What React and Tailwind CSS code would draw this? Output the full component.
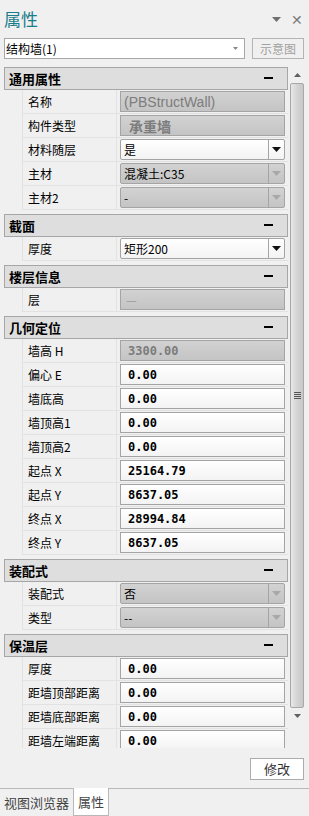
import React from "react";

const cjk = { fontFamily: '"Noto Sans CJK SC", "Noto Sans", sans-serif' };
const num = { fontFamily: '"DejaVu Sans Mono", "Liberation Mono", monospace' };

const sections = [
  {
    title: "通用属性",
    rows: [
      { name: "名称", value: "(PBStructWall)", kind: "ro", font: "latin" },
      { name: "构件类型", value: "承重墙", kind: "ro", font: "bold" },
      { name: "材料随层", value: "是", kind: "combo" },
      { name: "主材", value: "混凝土:C35", kind: "combo-ro" },
      { name: "主材2", value: "-", kind: "combo-ro" },
    ],
  },
  { title: "截面", rows: [{ name: "厚度", value: "矩形200", kind: "combo" }] },
  { title: "楼层信息", rows: [{ name: "层", value: "—", kind: "ro", font: "dash" }] },
  {
    title: "几何定位",
    rows: [
      { name: "墙高 H", value: "3300.00", kind: "ro", font: "num" },
      { name: "偏心 E", value: "0.00", kind: "edit" },
      { name: "墙底高", value: "0.00", kind: "edit" },
      { name: "墙顶高1", value: "0.00", kind: "edit" },
      { name: "墙顶高2", value: "0.00", kind: "edit" },
      { name: "起点 X", value: "25164.79", kind: "edit" },
      { name: "起点 Y", value: "8637.05", kind: "edit" },
      { name: "终点 X", value: "28994.84", kind: "edit" },
      { name: "终点 Y", value: "8637.05", kind: "edit" },
    ],
  },
  {
    title: "装配式",
    rows: [
      { name: "装配式", value: "否", kind: "combo-ro" },
      { name: "类型", value: "--", kind: "combo-ro" },
    ],
  },
  {
    title: "保温层",
    rows: [
      { name: "厚度", value: "0.00", kind: "edit" },
      { name: "距墙顶部距离", value: "0.00", kind: "edit" },
      { name: "距墙底部距离", value: "0.00", kind: "edit" },
      { name: "距墙左端距离", value: "0.00", kind: "edit" },
    ],
  },
];

function Arrow({ dark }) {
  return (
    <svg width="9" height="5" viewBox="0 0 9 5">
      <path d="M0 0h9L4.5 5z" fill={dark ? "#111" : "#a8a8a8"} />
    </svg>
  );
}

function Value({ row }) {
  const ro = row.kind === "ro" || row.kind === "combo-ro";
  const bg = ro
    ? "bg-gradient-to-b from-[#d2d2d2] to-[#c4c4c4]"
    : "bg-gradient-to-b from-[#ffffff] to-[#f3f3f3]";
  const combo = row.kind === "combo" || row.kind === "combo-ro";
  let text;
  if (row.font === "latin") {
    text = (
      <span className="text-[14px] text-[#7c7c7c]" style={{ fontFamily: '"Liberation Sans", Arial, sans-serif' }}>
        {row.value}
      </span>
    );
  } else if (row.font === "bold") {
    text = (
      <span className="pl-[5px] text-[14px] font-bold text-[#7c7c7c]" style={cjk}>
        {row.value}
      </span>
    );
  } else if (row.font === "dash") {
    text = <span className="pl-[2px] text-[12px] text-[#9a9a9a]" style={cjk}>{row.value}</span>;
  } else if (row.font === "num") {
    text = <span className="pl-[4px] text-[12px] font-bold text-[#7c7c7c]" style={num}>{row.value}</span>;
  } else if (row.kind === "edit") {
    text = <span className="pl-[4px] text-[12px] font-bold text-black" style={num}>{row.value}</span>;
  } else {
    text = <span className="text-[12px] text-black" style={cjk}>{row.value}</span>;
  }
  return (
    <div className={`mx-[3px] my-px flex flex-1 items-stretch border border-[#a4a4a4] ${combo ? "rounded-[2px]" : ""} ${bg}`}>
      <div className="flex flex-1 items-center overflow-hidden pl-[3px] leading-none">{text}</div>
      {combo && (
        <div className="flex w-[16px] items-center justify-center border-l border-[#a4a4a4]">
          <Arrow dark={!ro} />
        </div>
      )}
    </div>
  );
}

function Section({ s }) {
  return (
    <div className="mb-[4px]">
      <div className="flex h-[23px] items-center justify-between border border-[#a6a6a6] bg-[#dedede] pl-[4px] pr-[14px]">
        <span className="text-[13px] font-bold text-black" style={cjk}>{s.title}</span>
        <span className="mb-[1px] h-[2px] w-[9px] bg-black" />
      </div>
      {s.rows.map((r, i) => (
        <div key={i} className="ml-[18px] flex h-[24px] border-b border-[#e2e2e2]">
          <div className="flex w-[95px] items-center border-r border-l border-[#e2e2e2] pl-[5px] text-[12px] text-black" style={cjk}>
            {r.name}
          </div>
          <Value row={r} />
        </div>
      ))}
    </div>
  );
}

function ScrollBar() {
  return (
    <div className="flex w-[14px] flex-col">
      <div className="flex h-[16px] items-center justify-center">
        <svg width="7" height="4" viewBox="0 0 7 4"><path d="M0 4h7L3.5 0z" fill="#606060" /></svg>
      </div>
      <div className="flex h-[625px] items-center justify-center rounded-[2px] border border-[#a8a8a8] bg-gradient-to-r from-[#e8e8e8] via-[#d4d4d4] to-[#c8c8c8]">
        <div className="flex flex-col gap-[1px]">
          <span className="h-px w-[7px] bg-[#555]" />
          <span className="h-px w-[7px] bg-[#555]" />
          <span className="h-px w-[7px] bg-[#555]" />
          <span className="h-px w-[7px] bg-[#555]" />
        </div>
      </div>
      <div className="flex-1" />
      <div className="flex h-[16px] items-center justify-center">
        <svg width="7" height="4" viewBox="0 0 7 4"><path d="M0 0h7L3.5 4z" fill="#606060" /></svg>
      </div>
    </div>
  );
}

export default function App() {
  return (
    <div className="flex h-[816px] w-[309px] flex-col overflow-hidden bg-[#f0f0f0]" style={cjk}>
      <div className="flex h-[38px] items-center justify-between pl-[4px] pr-[6px]">
        <span className="text-[17px] text-[#1a7d8c]">属性</span>
        <div className="flex items-center gap-[10px] text-[#7a7a7a]">
          <svg width="9" height="5" viewBox="0 0 9 5"><path d="M0 0h9L4.5 5z" fill="#707070" /></svg>
          <span className="text-[14px] leading-none">✕</span>
        </div>
      </div>
      <div className="flex h-[21px] items-stretch pl-[4px] pr-[5px]">
        <div className="flex w-[241px] items-center justify-between border border-[#a8a8a8] bg-white pr-[6px]">
          <span className="pl-px text-[12px] text-black">结构墙(1)</span>
          <svg width="5" height="3" viewBox="0 0 5 3"><path d="M0 0h5L2.5 3z" fill="#888" /></svg>
        </div>
        <div className="ml-auto flex w-[52px] items-center justify-center border border-[#b4b4b4] text-[12px] text-[#a0a0a0]">
          示意图
        </div>
      </div>
      <div className="mt-[8px] flex h-[681px] pl-[4px] pr-[5px]">
        <div className="w-[284px] overflow-hidden">
          {sections.map((s, i) => (
            <Section key={i} s={s} />
          ))}
        </div>
        <div className="ml-[2px]">
          <ScrollBar />
        </div>
      </div>
      <div className="mt-[10px] flex justify-end pr-[5px]">
        <div className="flex h-[22px] w-[54px] items-center justify-center border border-[#acacac] bg-white text-[13px] text-[#333]">
          修改
        </div>
      </div>
      <div className="mt-[8px] flex flex-1 items-stretch border-t border-[#b8b8b8] pl-[4px]">
        <div className="flex w-[69px] items-center text-[13px] text-[#444]">视图浏览器</div>
        <div className="-mt-px flex w-[36px] items-center justify-center border border-t-0 border-[#b8b8b8] bg-white text-[13px] text-[#444]">
          属性
        </div>
      </div>
    </div>
  );
}
